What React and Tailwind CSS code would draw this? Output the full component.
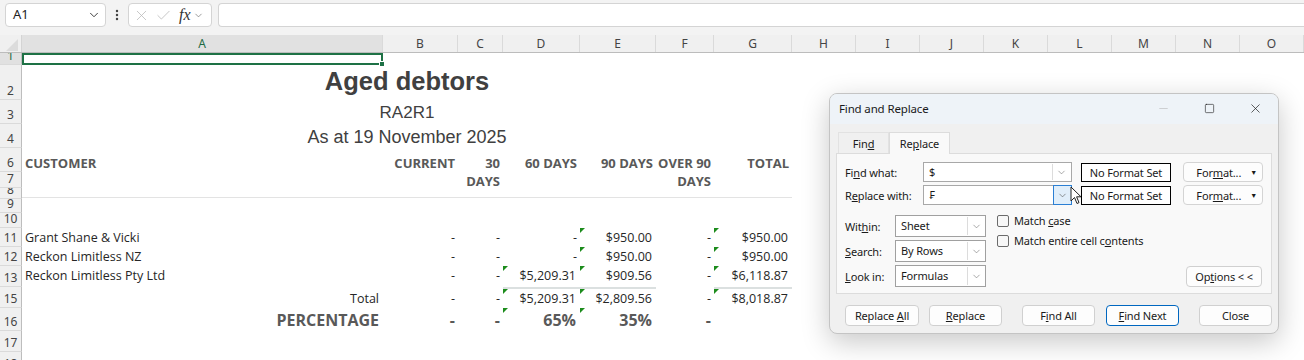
import { ChevronDown, X, Check, Minus, Square, EllipsisVertical } from "lucide-react";

const cols = [
  ["A", "w-[361px]"],
  ["B", "w-[75px]"],
  ["C", "w-[45px]"],
  ["D", "w-[77px]"],
  ["E", "w-[76px]"],
  ["F", "w-[58px]"],
  ["G", "w-[78px]"],
  ["H", "w-[64px]"],
  ["I", "w-[64px]"],
  ["J", "w-[64px]"],
  ["K", "w-[64px]"],
  ["L", "w-[64px]"],
  ["M", "w-[64px]"],
  ["N", "w-[64px]"],
  ["O", "w-[64px]"],
];

function Row({ n, h, sel, children }) {
  return (
    <div className={`flex ${h}`}>
      <div
        className={`w-[22px] shrink-0 flex items-end justify-center overflow-hidden border-r border-b border-r-[#bdbdbd] border-b-[#dadada] font-['Noto_Sans',sans-serif] text-[12px] leading-[14px] pb-[1px] ${
          sel ? "bg-[#e1e1e1] text-[#1e6b44]" : "bg-[#f0f0f0] text-[#444]"
        }`}
      >
        {n}
      </div>
      {children}
    </div>
  );
}

function Cell({ w, right, dash, tri, line, className = "", children }) {
  return (
    <div
      className={`relative shrink-0 flex items-end whitespace-nowrap ${w} ${
        right ? (dash ? "justify-end pr-[3px]" : "justify-end pr-[4px]") : "pl-[3px]"
      } ${line ? "border-t-2 border-[#dbe0e0]" : ""} ${className}`}
    >
      {tri && (
        <span className="absolute left-0 top-0 w-0 h-0 border-t-[5px] border-r-[5px] border-t-[#1c8c1c] border-r-transparent" />
      )}
      {children}
    </div>
  );
}

// строка с клиентом и суммами A..G
function DataRow({ n, h, pb, name, vals, nameRight }) {
  const ws = ["w-[75px]", "w-[45px]", "w-[77px]", "w-[76px]", "w-[58px]", "w-[78px]"];
  return (
    <Row n={n} h={h}>
      <div className={`flex ${pb}`}>
        <Cell w="w-[361px]" right={nameRight}>
          {name}
        </Cell>
        {vals.map((v, i) => (
          <Cell key={i} w={ws[i]} right dash={v.t === "-"} tri={v.tri} line={v.line}>
            {v.t}
          </Cell>
        ))}
      </div>
    </Row>
  );
}

function Btn({ w = "w-[74px]", focus, className = "", children }) {
  return (
    <div
      className={`${w} h-[21px] shrink-0 rounded-[4px] border bg-[#fdfdfd] flex items-center justify-center ${
        focus ? "border-[#0067c0]" : "border-[#d0d0d0]"
      } ${className}`}
    >
      <span>{children}</span>
    </div>
  );
}

function FormatBtn() {
  return (
    <div className="ml-[12px] w-[80px] h-[20px] shrink-0 rounded-[4px] border border-[#d4d4d4] bg-[#fdfdfd] flex items-center justify-end pr-[5px] gap-[9px]">
      <span>
        For<span className="underline">m</span>at...
      </span>
      <span className="text-[7px]">▼</span>
    </div>
  );
}

function Combo({ value, hot }) {
  return (
    <div className="w-[149px] h-[20px] flex bg-white border border-[#a8a8a8]">
      <span className="flex-1 pl-[5px] leading-[18px]">{value}</span>
      {hot ? (
        <span className="w-[19px] -my-px -mr-px flex items-center justify-center border border-[#2b7fd4] bg-[#e0eefa]">
          <ChevronDown size={11} strokeWidth={1.3} className="text-[#505050]" />
        </span>
      ) : (
        <span className="w-[18px] my-[1px] mr-[1px] flex items-center justify-center border-l border-[#dcdcdc]">
          <ChevronDown size={11} strokeWidth={1.3} className="text-[#707070]" />
        </span>
      )}
    </div>
  );
}

function Select({ value }) {
  return (
    <div className="w-[91px] h-[22px] flex bg-white border border-[#a0a0a0]">
      <span className="flex-1 pl-[5px] leading-[20px]">{value}</span>
      <span className="w-[17px] my-[1px] mr-[1px] flex items-center justify-center border-l border-[#dcdcdc]">
        <ChevronDown size={11} strokeWidth={1.3} className="text-[#707070]" />
      </span>
    </div>
  );
}

function Box() {
  return <span className="w-[12px] h-[12px] rounded-[2px] border border-[#6b6b6b] bg-[#f7f7f7] shrink-0" />;
}

function Dialog() {
  return (
    <div className="absolute left-[829px] top-[93px] w-[450px] h-[241px] rounded-[8px] border border-[#c4c4c4] bg-[#f0f0f0] shadow-[0_8px_28px_rgba(0,0,0,0.22)] overflow-hidden font-['Noto_Sans',sans-serif] text-[11px] leading-[15px] tracking-[-0.15px] text-[#1a1a1a]">
      <div className="h-[30px] bg-[#eef3f8] flex items-center pb-[2px]">
        <span className="pl-[9px] flex-1 text-[11.5px]">Find and Replace</span>
        <div className="w-[46px] flex justify-center text-[#b0b0b0]">
          <Minus size={13} strokeWidth={1} />
        </div>
        <div className="w-[46px] flex justify-center">
          <Square size={11} strokeWidth={1.3} />
        </div>
        <div className="w-[46px] flex justify-center">
          <X size={15} strokeWidth={1.1} />
        </div>
      </div>

      <div className="px-[6px]">
        <div className="h-[29px] flex items-end pl-[2px]">
          <div className="w-[51px] h-[21px] border border-b-0 border-[#e2e2e2] bg-[#f0f0f0] flex items-center justify-center">
            <span>
              Fin<span className="underline">d</span>
            </span>
          </div>
          <div className="w-[61px] h-[22px] border border-b-0 border-[#dcdcdc] bg-[#f9f9f9] flex items-center justify-center -mb-px relative z-10">
            <span>
              Re<span className="underline">p</span>lace
            </span>
          </div>
        </div>

        <div className="h-[141px] border border-[#dcdcdc] bg-[#f9f9f9] pl-[8px] pt-[8px] flex flex-col">
          <div className="flex items-center h-[20px]">
            <span className="w-[78px]">
              Fi<span className="underline">n</span>d what:
            </span>
            <Combo value="$" />
            <div className="ml-[9px] w-[90px] h-[19px] border border-black bg-white flex items-center justify-center">
              No Format Set
            </div>
            <FormatBtn />
          </div>
          <div className="flex items-center h-[20px] mt-[3px]">
            <span className="w-[78px]">
              R<span className="underline">e</span>place with:
            </span>
            <Combo value="₣" hot />
            <div className="ml-[9px] w-[90px] h-[19px] border border-black bg-white flex items-center justify-center">
              No Format Set
            </div>
            <FormatBtn />
          </div>

          <div className="flex mt-[10px]">
            <div className="flex flex-col gap-[3px]">
              <div className="flex items-center">
                <span className="w-[50px]">
                  Wit<span className="underline">h</span>in:
                </span>
                <Select value="Sheet" />
              </div>
              <div className="flex items-center">
                <span className="w-[50px]">
                  <span className="underline">S</span>earch:
                </span>
                <Select value="By Rows" />
              </div>
              <div className="flex items-center">
                <span className="w-[50px]">
                  <span className="underline">L</span>ook in:
                </span>
                <Select value="Formulas" />
              </div>
            </div>
            <div className="ml-[11px] -mt-[2px] flex flex-col gap-[5px]">
              <div className="flex items-center gap-[5px]">
                <Box />
                <span>
                  Match <span className="underline">c</span>ase
                </span>
              </div>
              <div className="flex items-center gap-[5px]">
                <Box />
                <span>
                  Match entire cell c<span className="underline">o</span>ntents
                </span>
              </div>
            </div>
            <div className="ml-auto mr-[9px] self-end">
              <Btn w="w-[76px]">
                Op<span className="underline">t</span>ions &lt; &lt;
              </Btn>
            </div>
          </div>
        </div>
      </div>

      <div className="flex mt-[11px] pl-[15px]">
        <Btn>
          Replace <span className="underline">A</span>ll
        </Btn>
        <Btn w="w-[73px]" className="ml-[10px]">
          <span className="underline">R</span>eplace
        </Btn>
        <Btn w="w-[73px]" className="ml-[20px]">
          F<span className="underline">i</span>nd All
        </Btn>
        <Btn w="w-[73px]" focus className="ml-[11px]">
          <span className="underline">F</span>ind Next
        </Btn>
        <Btn w="w-[73px]" className="ml-[20px]">
          Close
        </Btn>
      </div>

      {/* указатель мыши над кнопкой списка */}
      <svg className="absolute left-[240px] top-[92px]" width="12" height="19" viewBox="0 0 12 19">
        <path d="M1 1 L1 15 L4.5 11.5 L7 17.5 L9 16.6 L6.6 10.8 L11 10.8 Z" fill="white" stroke="#222" strokeWidth="1" strokeLinejoin="round" />
      </svg>
    </div>
  );
}

export default function App() {
  const d = (t, extra = {}) => ({ t, ...extra });
  return (
    <div className="relative w-[1304px] h-[360px] overflow-hidden bg-white">
      {/* строка формул */}
      <div className="h-[35px] bg-[#f3f3f3] flex items-start pt-[3px] pl-[5px] font-['Noto_Sans',sans-serif]">
        <div className="w-[101px] h-[24px] rounded-[4px] border border-[#d4d4d4] bg-white flex items-center pl-[7px] pr-[4px] text-[13px] text-[#222]">
          <span className="flex-1">A1</span>
          <ChevronDown size={14} strokeWidth={1.6} className="text-[#333]" />
        </div>
        <div className="w-[22px] h-[24px] flex items-center justify-center text-[#444]">
          <EllipsisVertical size={14} strokeWidth={2.2} />
        </div>
        <div className="w-[84px] h-[24px] rounded-[4px] border border-[#d4d4d4] bg-white flex items-center pl-[4px] text-[#b8b8b8]">
          <X size={17} strokeWidth={1.1} />
          <Check size={17} strokeWidth={1.1} className="ml-[5px]" />
          <span className="ml-[7px] font-['Liberation_Serif',serif] italic text-[16px] text-[#333] leading-none">fx</span>
          <ChevronDown size={11} strokeWidth={1.4} className="ml-[2px] text-[#666]" />
        </div>
        <div className="ml-[6px] flex-1 h-[24px] rounded-l-[4px] border border-r-0 border-[#d4d4d4] bg-white" />
      </div>

      {/* заголовки столбцов */}
      <div className="flex h-[18px] bg-[#f0f0f0] border-b border-[#bcbcbc] font-['Noto_Sans',sans-serif] text-[12px] text-[#444]">
        <div className="w-[22px] shrink-0 border-r border-[#d4d4d4] flex items-end justify-end pr-[3px] pb-[1px]">
          <svg width="12" height="12" viewBox="0 0 12 12">
            <path d="M12 0 L12 12 L0 12 Z" fill="#dcdcdc" />
          </svg>
        </div>
        {cols.map(([k, w]) => (
          <div
            key={k}
            className={`${w} shrink-0 border-r border-[#dadada] flex items-center justify-center ${
              k === "A" ? "bg-[#e1e1e1] text-[#1e6b44]" : ""
            }`}
          >
            {k}
          </div>
        ))}
      </div>

      {/* лист */}
      <div className="font-['Open_Sans',sans-serif] text-[12.5px] leading-[16px] text-[#262626]">
        <Row n="1" h="h-[12px]" sel>
          <div className="relative w-[361px] shrink-0 border-2 border-[#1e7145]">
            <span className="absolute -right-[4px] -bottom-[4px] w-[6px] h-[6px] bg-[#1e7145] border border-white" />
          </div>
        </Row>
        <Row n="2" h="h-[35px]">
          <div className="w-[770px] shrink-0 flex items-end justify-center pb-[5px] font-['Liberation_Sans',sans-serif] font-bold text-[25.5px] leading-[28px] text-[#404040]">
            Aged debtors
          </div>
        </Row>
        <Row n="3" h="h-[24px]">
          <div className="w-[770px] shrink-0 flex items-end justify-center pb-[1px] font-['Liberation_Sans',sans-serif] text-[17px] leading-[20px] text-[#404040]">
            RA2R1
          </div>
        </Row>
        <Row n="4" h="h-[24px]">
          <div className="w-[770px] shrink-0 flex items-end justify-center pb-[1px] font-['Liberation_Sans',sans-serif] text-[18px] leading-[20px] text-[#404040]">
            As at 19 November 2025
          </div>
        </Row>
        <Row n="6" h="h-[24px]">
          <div className="flex font-bold text-[13px] text-[#595959] pb-[1px]">
            <Cell w="w-[361px]">CUSTOMER</Cell>
            <Cell w="w-[75px]" right dash>CURRENT</Cell>
            <Cell w="w-[45px]" right dash>30</Cell>
            <Cell w="w-[77px]" right dash>60 DAYS</Cell>
            <Cell w="w-[76px]" right dash>90 DAYS</Cell>
            <Cell w="w-[58px]" right dash>OVER 90</Cell>
            <Cell w="w-[78px]" right dash>TOTAL</Cell>
          </div>
        </Row>
        <Row n="7" h="h-[16px]">
          <div className="flex font-bold text-[13px] text-[#595959] leading-[13px]">
            <Cell w="w-[361px]" />
            <Cell w="w-[75px]" />
            <Cell w="w-[45px]" right dash>DAYS</Cell>
            <Cell w="w-[77px]" />
            <Cell w="w-[76px]" />
            <Cell w="w-[58px]" right dash>DAYS</Cell>
          </div>
        </Row>
        <Row n="8" h="h-[11px]">
          <div className="w-[770px] shrink-0 border-b border-[#e3e3e3] mb-[1px]" />
        </Row>
        <Row n="9" h="h-[14px]" />
        <Row n="10" h="h-[15px]" />
        <DataRow
          n="11"
          h="h-[19px]"
          pb="pb-[1px]"
          name="Grant Shane & Vicki"
          vals={[d("-"), d("-"), d("-"), d("$950.00", { tri: true }), d("-"), d("$950.00", { tri: true })]}
        />
        <DataRow
          n="12"
          h="h-[19px]"
          pb="pb-[1px]"
          name="Reckon Limitless NZ"
          vals={[d("-"), d("-"), d("-"), d("$950.00", { tri: true }), d("-"), d("$950.00", { tri: true })]}
        />
        <DataRow
          n="13"
          h="h-[21px]"
          pb="pb-[3px]"
          name="Reckon Limitless Pty Ltd"
          vals={[
            d("-"),
            d("-"),
            d("$5,209.31", { tri: true }),
            d("$909.56", { tri: true }),
            d("-"),
            d("$6,118.87", { tri: true }),
          ]}
        />
        <DataRow
          n="15"
          h="h-[21px]"
          pb="pb-[1px]"
          name="Total"
          nameRight
          vals={[
            d("-"),
            d("-"),
            d("$5,209.31", { tri: true, line: true }),
            d("$2,809.56", { tri: true, line: true }),
            d("-"),
            d("$8,018.87", { tri: true, line: true }),
          ]}
        />
        <Row n="16" h="h-[23px]">
          <div className="flex font-bold text-[16px] leading-[22px] text-[#595959]">
            <Cell w="w-[361px]" right>PERCENTAGE</Cell>
            <Cell w="w-[75px]" right dash>-</Cell>
            <Cell w="w-[45px]" right dash>-</Cell>
            <Cell w="w-[77px]" right tri>65%</Cell>
            <Cell w="w-[76px]" right tri>35%</Cell>
            <Cell w="w-[58px]" right dash>-</Cell>
          </div>
        </Row>
        <Row n="17" h="h-[21px]" />
        <Row n="18" h="h-[21px]" />
      </div>

      <Dialog />
    </div>
  );
}
